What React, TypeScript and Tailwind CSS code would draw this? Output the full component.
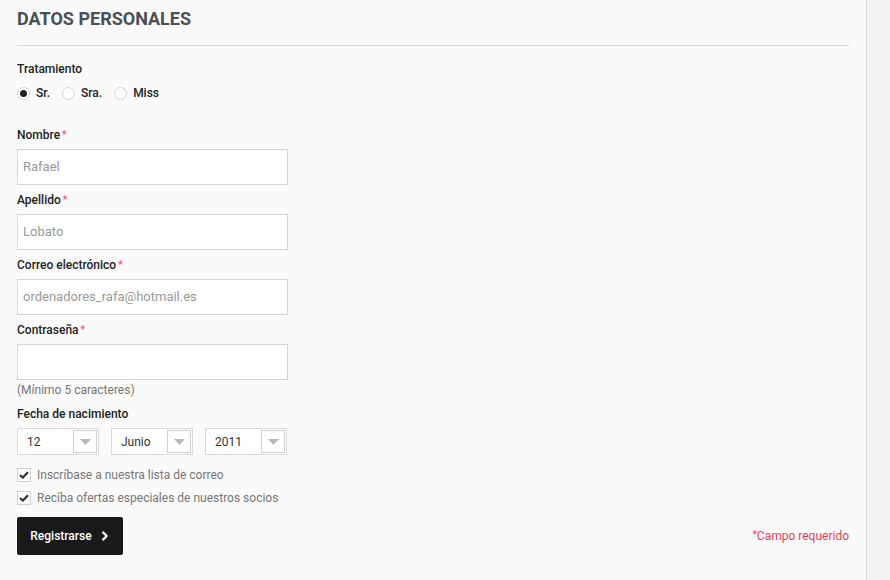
import { ChevronRight } from 'lucide-react'

function Label({ text }: { text: string }) {
  return (
    <div className="text-[12px] leading-[14px] font-medium text-[#222] mb-[7px]">
      {text}
      <span className="text-[#f0506e] text-[10px] align-top ml-[2px]">*</span>
    </div>
  )
}

function Field({ label, value }: { label: string; value?: string }) {
  return (
    <div className="mb-[8px]">
      <Label text={label} />
      <div className="w-[271px] h-[36px] border border-[#d5d5d5] bg-white px-[5px] flex items-center text-[13px] text-[#999]">
        {value}
      </div>
    </div>
  )
}

function Select({ value }: { value: string }) {
  return (
    <div className="w-[82px] h-[27px] border border-[#d9d9d9] bg-white flex items-center justify-between pl-[9px] pr-[1px]">
      <span className="text-[12px] text-[#333]">{value}</span>
      <div className="w-[24px] h-[23px] border border-[#cfcfcf] flex items-center justify-center">
        <svg width="11" height="6" viewBox="0 0 11 6">
          <path d="M0 0 L11 0 L5.5 6 Z" fill="#b8b8b8" />
        </svg>
      </div>
    </div>
  )
}

function Radio({ label, checked }: { label: string; checked?: boolean }) {
  return (
    <div className="flex items-center gap-[6px]">
      <span className="w-[13px] h-[13px] rounded-full border border-[#d2d2d2] bg-white flex items-center justify-center">
        {checked && <span className="w-[7px] h-[7px] rounded-full bg-[#222]" />}
      </span>
      <span className="text-[12px] font-medium text-[#222]">{label}</span>
    </div>
  )
}

function Checkbox({ label }: { label: string }) {
  return (
    <div className="flex items-center gap-[6px] h-[14px]">
      <span className="w-[14px] h-[14px] border border-[#d2d2d2] bg-white flex items-center justify-center">
        <svg width="10" height="8" viewBox="0 0 10 8">
          <path d="M1 4 L3.8 6.6 L9 1.2" stroke="#333" strokeWidth="2.2" fill="none" />
        </svg>
      </span>
      <span className="text-[12px] text-[#777]">{label}</span>
    </div>
  )
}

export default function App() {
  return (
    <div className="w-[890px] h-[580px] bg-[#f3f3f3] flex font-['Roboto',sans-serif]">
      <div className="w-[867px] h-full bg-[#fafafa] border-r border-[#dcdcdc] pl-[17px] pr-[17px]">
        <h2 className="text-[18px] leading-[20px] font-bold text-[#4a4f55] pt-[9px] pb-[16px] border-b border-[#d7d7d7]">
          DATOS PERSONALES
        </h2>
        <div className="mt-[16px] text-[12px] leading-[14px] font-medium text-[#222]">Tratamiento</div>
        <div className="mt-[8px] flex gap-[12px]">
          <Radio label="Sr." checked />
          <Radio label="Sra." />
          <Radio label="Miss" />
        </div>

        <div className="mt-[26px]">
          <Field label="Nombre" value="Rafael" />
          <Field label="Apellido" value="Lobato" />
          <Field label="Correo electrónico" value="ordenadores_rafa@hotmail.es" />
          <div>
            <Label text="Contraseña" />
            <div className="w-[271px] h-[36px] border border-[#d5d5d5] bg-white" />
          </div>
          <div className="mt-[3px] text-[12px] leading-[14px] text-[#777]">(Mínimo 5 caracteres)</div>
        </div>

        <div className="mt-[10px] text-[12px] leading-[14px] font-medium text-[#222]">Fecha de nacimiento</div>
        <div className="mt-[7px] flex gap-[12px]">
          <Select value="12" />
          <Select value="Junio" />
          <Select value="2011" />
        </div>

        <div className="mt-[13px] flex flex-col gap-[9px]">
          <Checkbox label="Inscríbase a nuestra lista de correo" />
          <Checkbox label="Recíba ofertas especiales de nuestros socios" />
        </div>

        <div className="mt-[12px] flex items-center justify-between">
          <button className="h-[38px] w-[106px] bg-[#1a1a1a] rounded-[2px] text-white text-[12px] font-medium flex items-center justify-center gap-[6px] pl-[2px]">
            Registrarse
            <ChevronRight size={14} strokeWidth={4} />
          </button>
          <span className="text-[12px] text-[#ee3a5c]">
            <span className="text-[10px] align-top">*</span>Campo requerido
          </span>
        </div>
      </div>
    </div>
  )
}
